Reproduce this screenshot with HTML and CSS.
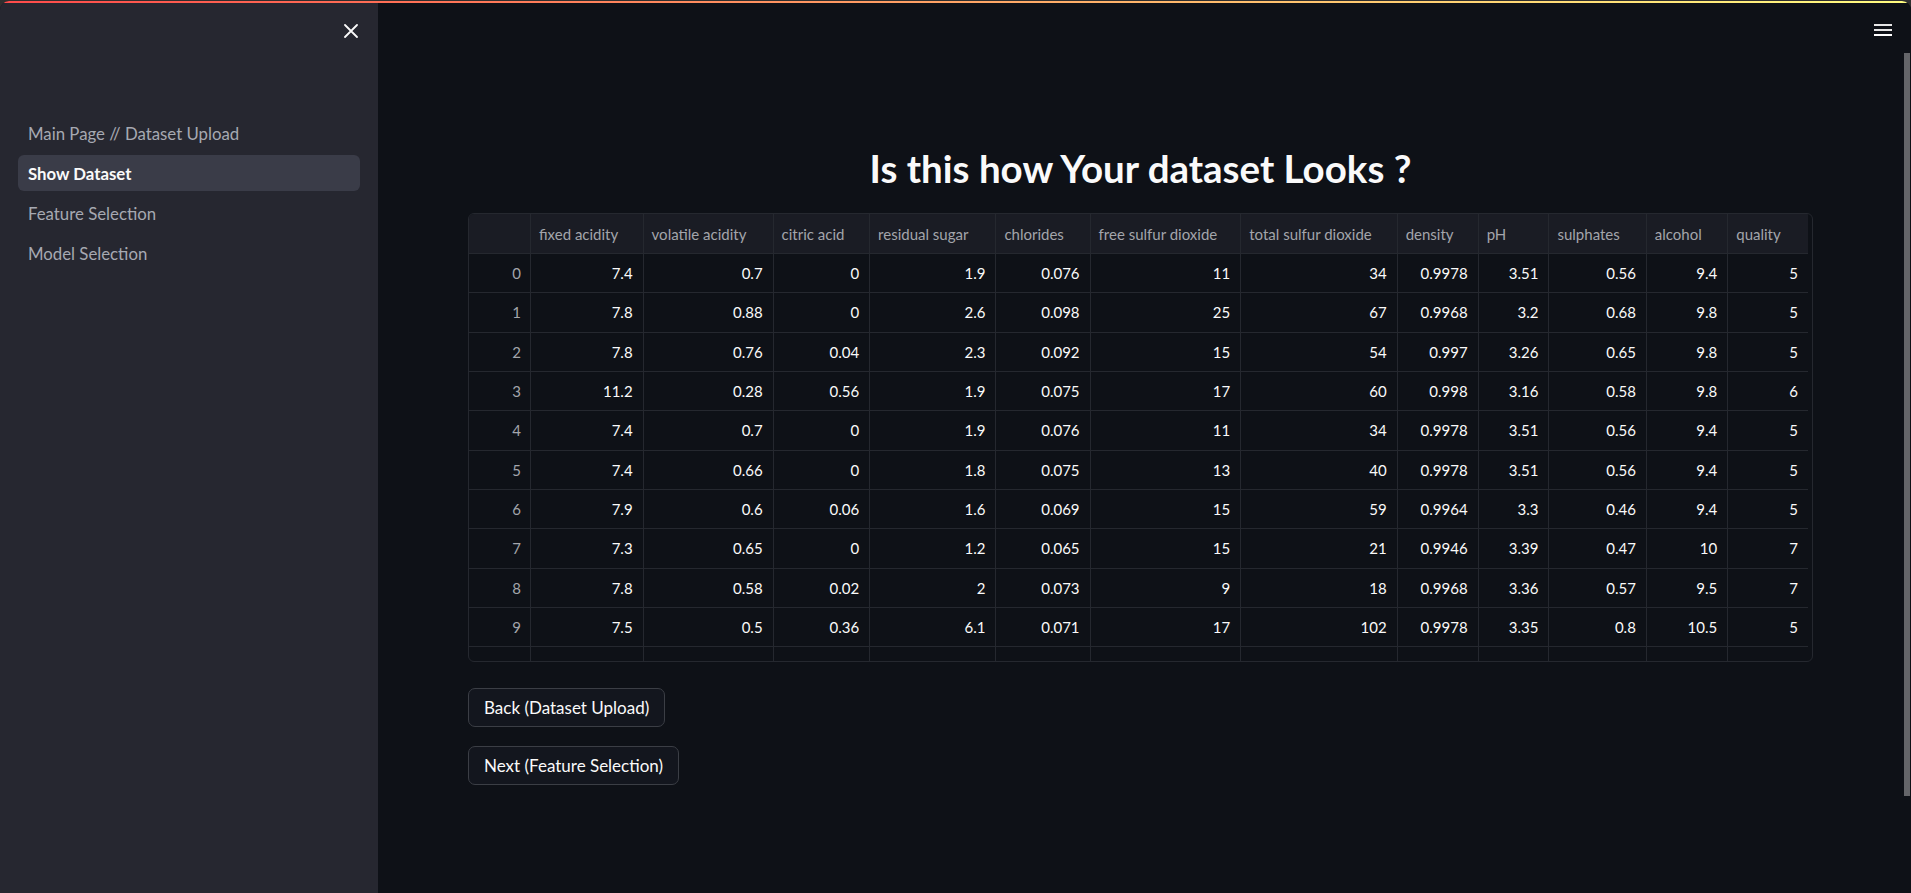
FILE: index.html
```html
<!DOCTYPE html>
<html lang="en">
<head>
<meta charset="utf-8">
<title>Show Dataset</title>
<link rel="stylesheet" href="styles.css">
</head>
<body>
<div class="window">
  <div class="deco"></div>
  <div class="app">
    <aside class="sidebar">
      <div class="sidebar-head">
        <button class="close-btn" aria-label="Close sidebar">
          <svg width="14" height="14" viewBox="0 0 14 14"><path d="M1 1 L13 13 M13 1 L1 13" stroke="#fafafa" stroke-width="1.8" stroke-linecap="round"/></svg>
        </button>
      </div>
      <nav class="nav">
        <a class="nav-item">Main Page // Dataset Upload</a>
        <a class="nav-item active">Show Dataset</a>
        <a class="nav-item">Feature Selection</a>
        <a class="nav-item">Model Selection</a>
      </nav>
    </aside>
    <main class="main">
      <div class="menu-icon">
        <svg width="18" height="12" viewBox="0 0 18 12"><rect x="0" y="0" width="18" height="2" fill="#e6e6e6"/><rect x="0" y="5" width="18" height="2" fill="#e6e6e6"/><rect x="0" y="10" width="18" height="2" fill="#ffffff"/></svg>
      </div>
      <div class="scrollbar"></div>
      <div class="content">
        <h1 class="title">Is this how Your dataset Looks ?</h1>
        <div class="grid-wrap">
          <div class="grid">
            <div class="hc"></div><div class="hc">fixed acidity</div><div class="hc">volatile acidity</div><div class="hc">citric acid</div><div class="hc">residual sugar</div><div class="hc">chlorides</div><div class="hc">free sulfur dioxide</div><div class="hc">total sulfur dioxide</div><div class="hc">density</div><div class="hc">pH</div><div class="hc">sulphates</div><div class="hc">alcohol</div><div class="hc last">quality</div>

            <div class="ic">0</div><div class="c">7.4</div><div class="c">0.7</div><div class="c">0</div><div class="c">1.9</div><div class="c">0.076</div><div class="c">11</div><div class="c">34</div><div class="c">0.9978</div><div class="c">3.51</div><div class="c">0.56</div><div class="c">9.4</div><div class="c last">5</div>
            <div class="ic">1</div><div class="c">7.8</div><div class="c">0.88</div><div class="c">0</div><div class="c">2.6</div><div class="c">0.098</div><div class="c">25</div><div class="c">67</div><div class="c">0.9968</div><div class="c">3.2</div><div class="c">0.68</div><div class="c">9.8</div><div class="c last">5</div>
            <div class="ic">2</div><div class="c">7.8</div><div class="c">0.76</div><div class="c">0.04</div><div class="c">2.3</div><div class="c">0.092</div><div class="c">15</div><div class="c">54</div><div class="c">0.997</div><div class="c">3.26</div><div class="c">0.65</div><div class="c">9.8</div><div class="c last">5</div>
            <div class="ic">3</div><div class="c">11.2</div><div class="c">0.28</div><div class="c">0.56</div><div class="c">1.9</div><div class="c">0.075</div><div class="c">17</div><div class="c">60</div><div class="c">0.998</div><div class="c">3.16</div><div class="c">0.58</div><div class="c">9.8</div><div class="c last">6</div>
            <div class="ic">4</div><div class="c">7.4</div><div class="c">0.7</div><div class="c">0</div><div class="c">1.9</div><div class="c">0.076</div><div class="c">11</div><div class="c">34</div><div class="c">0.9978</div><div class="c">3.51</div><div class="c">0.56</div><div class="c">9.4</div><div class="c last">5</div>
            <div class="ic">5</div><div class="c">7.4</div><div class="c">0.66</div><div class="c">0</div><div class="c">1.8</div><div class="c">0.075</div><div class="c">13</div><div class="c">40</div><div class="c">0.9978</div><div class="c">3.51</div><div class="c">0.56</div><div class="c">9.4</div><div class="c last">5</div>
            <div class="ic">6</div><div class="c">7.9</div><div class="c">0.6</div><div class="c">0.06</div><div class="c">1.6</div><div class="c">0.069</div><div class="c">15</div><div class="c">59</div><div class="c">0.9964</div><div class="c">3.3</div><div class="c">0.46</div><div class="c">9.4</div><div class="c last">5</div>
            <div class="ic">7</div><div class="c">7.3</div><div class="c">0.65</div><div class="c">0</div><div class="c">1.2</div><div class="c">0.065</div><div class="c">15</div><div class="c">21</div><div class="c">0.9946</div><div class="c">3.39</div><div class="c">0.47</div><div class="c">10</div><div class="c last">7</div>
            <div class="ic">8</div><div class="c">7.8</div><div class="c">0.58</div><div class="c">0.02</div><div class="c">2</div><div class="c">0.073</div><div class="c">9</div><div class="c">18</div><div class="c">0.9968</div><div class="c">3.36</div><div class="c">0.57</div><div class="c">9.5</div><div class="c last">7</div>
            <div class="ic">9</div><div class="c">7.5</div><div class="c">0.5</div><div class="c">0.36</div><div class="c">6.1</div><div class="c">0.071</div><div class="c">17</div><div class="c">102</div><div class="c">0.9978</div><div class="c">3.35</div><div class="c">0.8</div><div class="c">10.5</div><div class="c last">5</div>
            <div class="ic"></div><div class="c"></div><div class="c"></div><div class="c"></div><div class="c"></div><div class="c"></div><div class="c"></div><div class="c"></div><div class="c"></div><div class="c"></div><div class="c"></div><div class="c"></div><div class="c last"></div>
          </div>
        </div>
        <div class="buttons">
          <button class="btn">Back (Dataset Upload)</button>
          <button class="btn">Next (Feature Selection)</button>
        </div>
      </div>
    </main>
  </div>
</div>
</body>
</html>
```
FILE: styles.css
```css
* { box-sizing: border-box; }
html, body { margin: 0; padding: 0; }
body {
  background: #2f2f2f;
  width: 1911px;
  height: 893px;
  overflow: hidden;
  font-family: Lato, "Liberation Sans", sans-serif;
  color: #fafafa;
}
.window {
  margin-top: 1px;
  height: 892px;
  border-radius: 9px 9px 0 0;
  overflow: hidden;
  display: flex;
  flex-direction: column;
  background: #0e1117;
}
.deco {
  height: 2px;
  flex: none;
  background: linear-gradient(90deg, #ff4b4b, #fffd80);
}
.app {
  flex: 1;
  display: flex;
  min-height: 0;
}
.sidebar {
  width: 378px;
  flex: none;
  background: #262730;
  padding: 0 18px;
}
.sidebar-head {
  height: 112px;
  display: flex;
  justify-content: flex-end;
  align-items: flex-start;
  padding-top: 12px;
  margin-right: -7px;
}
.close-btn {
  width: 32px;
  height: 32px;
  display: flex;
  align-items: center;
  justify-content: center;
  background: none;
  border: none;
  padding: 0;
}
.nav {
  display: flex;
  flex-direction: column;
  gap: 4px;
}
.nav-item {
  height: 36px;
  display: flex;
  align-items: center;
  padding-left: 10px;
  border-radius: 6px;
  font-size: 16.8px;
  color: #a6a9b2;
}
.nav-item.active {
  background: #3a3c48;
  color: #fafafa;
  font-weight: 700;
}
.main {
  flex: 1;
  position: relative;
  background: #0e1117;
  min-width: 0;
}
.menu-icon {
  position: absolute;
  top: 21px;
  right: 19px;
  line-height: 0;
}
.scrollbar {
  position: absolute;
  top: 50px;
  right: 1px;
  width: 6px;
  height: 743px;
  background: #646569;
}
.content {
  padding: 142px 98px 0 90px;
}
.title {
  margin: 0;
  text-align: center;
  font-size: 38.5px;
  line-height: 46px;
  font-weight: 700;
  color: #fafafa;
}
.grid-wrap {
  margin-top: 22px;
  height: 449px;
  border: 1px solid #25282f;
  border-radius: 6px;
  overflow: hidden;
}
.grid {
  display: grid;
  grid-template-columns: 62px 112.6px 130px 96.5px 126.3px 94.2px 150.7px 156.4px 81px 70.8px 97.4px 81.4px 79.6px;
  grid-template-rows: 40px repeat(11, 39.33px);
  font-size: 15px;
}
.hc, .c, .ic {
  border-right: 1px solid #25282f;
  border-bottom: 1px solid #25282f;
  display: flex;
  align-items: center;
  white-space: nowrap;
  overflow: hidden;
}
.hc {
  background: #1a1c24;
  color: #a3a5ab;
  padding-left: 8px;
}
.hc.last, .c.last { border-right: none; }
.c {
  justify-content: flex-end;
  padding-right: 10px;
  color: #fafafa;
}
.ic {
  justify-content: flex-end;
  padding-right: 9px;
  color: #a3a5ab;
}
.buttons {
  margin-top: 26px;
  display: flex;
  flex-direction: column;
  align-items: flex-start;
  gap: 18.6px;
}
.btn {
  height: 39.4px;
  padding: 0 15px;
  background: #13161e;
  border: 1px solid #3b3e45;
  border-radius: 7px;
  color: #fafafa;
  font-family: Lato, "Liberation Sans", sans-serif;
  font-size: 17px;
}
```
